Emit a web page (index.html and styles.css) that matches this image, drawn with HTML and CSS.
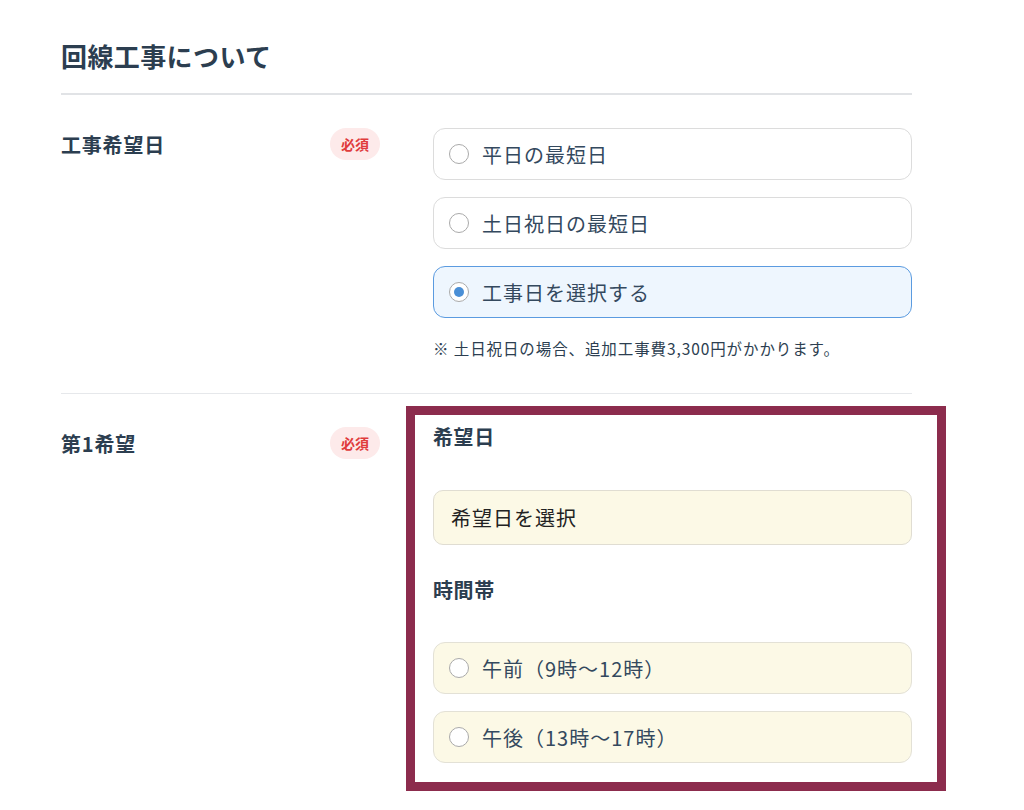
FILE: index.html
```html
<!DOCTYPE html>
<html lang="ja">
<head>
  <meta charset="UTF-8">
  <title>回線工事について</title>
  <link rel="stylesheet" href="styles.css">
</head>
<body>

  <div class="section">
    <h2 class="section-title">回線工事について</h2>

    <div class="row">
      <div class="label">工事希望日</div>
      <div><span class="badge">必須</span></div>
      <div class="field">
        <label class="option">
          <span class="radio"></span>
          <span>平日の最短日</span>
        </label>
        <label class="option">
          <span class="radio"></span>
          <span>土日祝日の最短日</span>
        </label>
        <label class="option selected">
          <span class="radio checked"></span>
          <span>工事日を選択する</span>
        </label>
        <p class="note">※ 土日祝日の場合、追加工事費3,300円がかかります。</p>
      </div>
    </div>

    <div class="row">
      <div class="label">第1希望</div>
      <div><span class="badge">必須</span></div>
      <div class="field highlighted">
        <div class="sub-title">希望日</div>
        <div class="date-input">希望日を選択</div>
        <div class="sub-title time">時間帯</div>
        <label class="option pending">
          <span class="radio"></span>
          <span>午前（9時〜12時）</span>
        </label>
        <label class="option pending">
          <span class="radio"></span>
          <span>午後（13時〜17時）</span>
        </label>
      </div>
    </div>
  </div>

</body>
</html>
```

FILE: styles.css
```css
body {
  margin: 0;
  font-family: "Noto Sans CJK JP", "Noto Sans", sans-serif;
  color: #2c3e50;
  background: #fff;
}
.section {
  width: 851px;
  margin-left: 61px;
  padding-top: 36px;
}
.section-title {
  font-size: 26px;
  font-weight: bold;
  letter-spacing: 0.4px;
  line-height: 40px;
  margin: 0;
  padding-bottom: 17px;
  border-bottom: 2px solid #e1e3e6;
}
.row {
  display: grid;
  grid-template-columns: 1fr 50px 479px;
  column-gap: 53px;
  padding: 33px 0 34px;
  border-bottom: 1px solid #e6e8eb;
}
.row:last-child {
  border-bottom: none;
}
.label {
  font-size: 20px;
  font-weight: bold;
  letter-spacing: 0.8px;
  line-height: 28px;
  margin-top: 3px;
}
.badge {
  display: inline-block;
  width: 50px;
  height: 32px;
  line-height: 32px;
  border-radius: 16px;
  background: #fdeaea;
  color: #e03c3c;
  font-size: 14px;
  font-weight: bold;
  text-align: center;
}
.field {
  display: flex;
  flex-direction: column;
  gap: 17px;
}
.option {
  display: flex;
  align-items: center;
  gap: 13px;
  height: 50px;
  padding: 0 15px;
  border: 1px solid #dcdcdc;
  border-radius: 12px;
  background: #fff;
  font-size: 20px;
  letter-spacing: 1px;
  color: #34495e;
}
.option.selected {
  background: #eef6fe;
  border-color: #5b9be0;
}
.option.pending {
  background: #fcf9e6;
  border-color: #e3e1d6;
}
.radio {
  width: 18px;
  height: 18px;
  border: 1px solid #aaa;
  border-radius: 50%;
  background: #fff;
  display: flex;
  align-items: center;
  justify-content: center;
}
.radio.checked::after {
  content: "";
  width: 10px;
  height: 10px;
  border-radius: 50%;
  background: #4a8fd6;
}
.note {
  margin: 2px 0 0;
  font-size: 15.5px;
  letter-spacing: 0.9px;
  color: #2c3e50;
}
.highlighted {
  position: relative;
  gap: 0;
}
.highlighted::before {
  content: "";
  position: absolute;
  left: -27px;
  right: -34px;
  top: -21px;
  bottom: -28px;
  border: 9px solid #8c2c4d;
  pointer-events: none;
}
.sub-title {
  font-size: 20px;
  font-weight: bold;
  letter-spacing: 0.6px;
  line-height: 26px;
  margin-top: -3px;
}
.date-input {
  margin-top: 40px;
  height: 53px;
  line-height: 53px;
  padding: 0 17px;
  border: 1px solid #e0ddd2;
  border-radius: 10px;
  background: #fcf9e6;
  font-size: 20px;
  letter-spacing: 1px;
  color: #222;
}
.sub-title.time {
  margin-top: 32px;
  margin-bottom: 39px;
}
.option.pending + .option.pending {
  margin-top: 17px;
}
```
